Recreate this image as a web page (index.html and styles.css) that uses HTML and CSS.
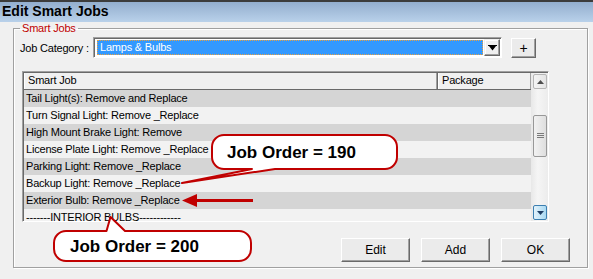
FILE: index.html
```html
<!DOCTYPE html>
<html lang="en">
<head>
<meta charset="UTF-8">
<title>Edit Smart Jobs</title>
<link rel="stylesheet" href="styles.css">
</head>
<body>
<div class="window">
    <div class="titlebar">Edit Smart Jobs</div>

    <fieldset class="group">
        <legend>Smart Jobs</legend>

        <div class="category-row">
            <label for="jobCategory">Job Category :</label>
            <div class="combo" id="jobCategory">
                <span class="combo-value">Lamps &amp; Bulbs</span>
                <span class="combo-btn">
                    <svg width="9" height="6" viewBox="0 0 9 6"><path d="M0 0H9V1H8L4.5 5.5L1 1H0Z" fill="#000"/></svg>
                </span>
            </div>
            <button class="btn btn-plus">+</button>
        </div>

        <div class="listview">
            <div class="list-main">
                <div class="list-header">
                    <div class="col-job">Smart Job</div>
                    <div class="col-pkg">Package</div>
                </div>
                <div class="row alt">Tail Light(s): Remove and Replace</div>
                <div class="row">Turn Signal Light: Remove _Replace</div>
                <div class="row alt">High Mount Brake Light: Remove</div>
                <div class="row">License Plate Light: Remove _Replace</div>
                <div class="row alt">Parking Light: Remove _Replace</div>
                <div class="row">Backup Light: Remove _Replace</div>
                <div class="row alt">Exterior Bulb: Remove _Replace</div>
                <div class="row">-------INTERIOR BULBS------------</div>
            </div>
            <div class="scrollbar">
                <div class="sb-btn">
                    <svg width="7" height="4" viewBox="0 0 7 4"><path d="M0 4L3.5 0L7 4Z" fill="#4d4d4d"/></svg>
                </div>
                <div class="sb-track">
                    <div class="sb-thumb">
                        <svg width="7" height="6" viewBox="0 0 7 6"><path d="M0 .5H7M0 2.5H7M0 4.5H7" stroke="#7a7a7a"/></svg>
                    </div>
                </div>
                <div class="sb-btn sb-hot">
                    <svg width="7" height="4" viewBox="0 0 7 4"><path d="M0 0H7L3.5 4Z" fill="#1f3e66"/></svg>
                </div>
            </div>
        </div>

        <div class="actions">
            <button class="btn">Edit</button>
            <button class="btn">Add</button>
            <button class="btn">OK</button>
        </div>
    </fieldset>

    <svg class="annotations" width="593" height="279" viewBox="0 0 593 279">
        <path class="callout" d="M224 135H385A12 12 0 0 1 397 147V157A12 12 0 0 1 385 169H275L182 183L252 169H224A12 12 0 0 1 212 157V147A12 12 0 0 1 224 135Z"/>
        <text class="callout-text" x="227" y="158">Job Order = 190</text>

        <path class="arrow-line" d="M253 200.5H196"/>
        <path class="arrow-head" d="M182 200.5L197 194V207Z"/>

        <path class="callout" d="M66 231H106.5L110.5 217L125 231H239A12 12 0 0 1 251 243V249A12 12 0 0 1 239 261H66A12 12 0 0 1 54 249V243A12 12 0 0 1 66 231Z"/>
        <text class="callout-text" x="70" y="252">Job Order = 200</text>
    </svg>
</div>
</body>
</html>
```

FILE: styles.css
```css
body {
    margin: 0;
    font-family: "Liberation Sans", Arial, sans-serif;
    font-size: 11px;
    letter-spacing: -0.2px;
}
.window {
    position: relative;
    width: 593px;
    height: 279px;
    background-color: #f0f0f0;
    overflow: hidden;
}
.titlebar {
    height: 20px;
    padding-left: 2px;
    border-top: 2px solid #3c3c3c;
    background: linear-gradient(#93aece, #b9d1ea);
    font-size: 14px;
    font-weight: bold;
    letter-spacing: 0;
    line-height: 19px;
    color: #000;
}
.group {
    margin: 0 5px 0 13px;
    padding: 2px 0 5px 6px;
    border: 1px solid #a0a0a0;
    box-shadow: inset 1px 1px 0 #fff, 1px 1px 0 #fff;
    min-width: 0;
}
.group legend {
    padding: 0 2px;
    color: #c00000;
    line-height: 13px;
}
.category-row {
    display: flex;
    align-items: center;
    height: 21px;
}
.category-row label {
    width: 73px;
    color: #000;
}
.combo {
    display: flex;
    align-items: center;
    width: 405px;
    height: 17px;
    padding: 1px;
    border: 1px solid;
    border-color: #a0a0a0 #fff #fff #a0a0a0;
    box-shadow: inset 1px 1px 0 #696969;
    background-color: #fff;
}
.combo-value {
    flex: 1;
    height: 13px;
    margin: 0 1px 0 2px;
    padding-left: 2px;
    border: 1px dotted #000;
    outline: 1px dotted #e8a040;
    outline-offset: -1px;
    background-color: #3399ff;
    color: #fff;
    line-height: 13px;
}
.combo-btn {
    display: flex;
    align-items: center;
    justify-content: center;
    width: 14px;
    height: 15px;
    border: 1px solid;
    border-color: #f0f0f0 #696969 #696969 #f0f0f0;
    box-shadow: inset -1px -1px 0 #a0a0a0, inset 1px 1px 0 #fff;
    background-color: #f0f0f0;
}
.btn {
    box-sizing: border-box;
    height: 24px;
    width: 69px;
    padding: 0;
    border: 1px solid;
    border-color: #fff #696969 #696969 #fff;
    box-shadow: inset -1px -1px 0 #a0a0a0;
    background-color: #ebebeb;
    font-family: "Liberation Sans", Arial, sans-serif;
    font-size: 12px;
    color: #000;
}
.btn-plus {
    width: 25px;
    height: 20px;
    margin-left: 9px;
    font-size: 14px;
    line-height: 16px;
}
.listview {
    display: flex;
    box-sizing: border-box;
    width: 527px;
    height: 151px;
    margin: 13px 0 0 2px;
    border: 1px solid;
    border-color: #a0a0a0 #fff #fff #a0a0a0;
    box-shadow: inset 1px 1px 0 #696969;
    padding: 1px 0 0 1px;
}
.list-main {
    flex: 1;
    overflow: hidden;
}
.list-header {
    display: flex;
    height: 17px;
    box-sizing: border-box;
    border-bottom: 1px solid #696969;
    background-color: #f0f0f0;
    line-height: 15px;
}
.list-header div {
    box-sizing: border-box;
    padding-left: 3px;
    border-left: 1px solid #fff;
    border-right: 1px solid #a0a0a0;
    box-shadow: 1px 0 0 #696969;
}
.col-job {
    width: 413px;
}
.col-pkg {
    width: 93px;
    margin-left: 1px;
}
.row {
    height: 17px;
    padding-left: 2px;
    background-color: #f2f2f2;
    line-height: 17px;
    white-space: nowrap;
}
.row.alt {
    background-color: #d5d5d5;
}
.scrollbar {
    display: flex;
    flex-direction: column;
    width: 17px;
    padding: 1px 1px 1px 2px;
    box-sizing: border-box;
    background: linear-gradient(90deg, #e8e8e8, #f5f5f5 40%, #ececec);
}
.sb-btn {
    display: flex;
    align-items: center;
    justify-content: center;
    height: 15px;
    border: 1px solid #b5b5b5;
    border-radius: 2px;
    background: linear-gradient(90deg, #f4f4f4, #e4e4e4);
    box-sizing: border-box;
}
.sb-hot {
    border-color: #3c7fb1;
    background: linear-gradient(90deg, #e2f2fb, #a9d9f2);
}
.sb-track {
    flex: 1;
    padding-top: 26px;
}
.sb-thumb {
    display: flex;
    align-items: center;
    justify-content: center;
    height: 42px;
    box-sizing: border-box;
    border: 1px solid #989898;
    border-radius: 2px;
    background: linear-gradient(90deg, #f2f2f2, #dedede);
}
.actions {
    display: flex;
    justify-content: flex-end;
    gap: 11px;
    margin-top: 16px;
    padding-right: 17px;
}
.annotations {
    position: absolute;
    left: 0;
    top: 0;
    pointer-events: none;
}
.callout {
    fill: #fff;
    stroke: #c00000;
    stroke-width: 2;
    stroke-linejoin: round;
}
.callout-text {
    font-family: "Liberation Sans", Arial, sans-serif;
    font-size: 17px;
    font-weight: bold;
    letter-spacing: 0;
    fill: #000;
}
.arrow-line {
    stroke: #c00000;
    stroke-width: 3;
}
.arrow-head {
    fill: #c00000;
}
```
